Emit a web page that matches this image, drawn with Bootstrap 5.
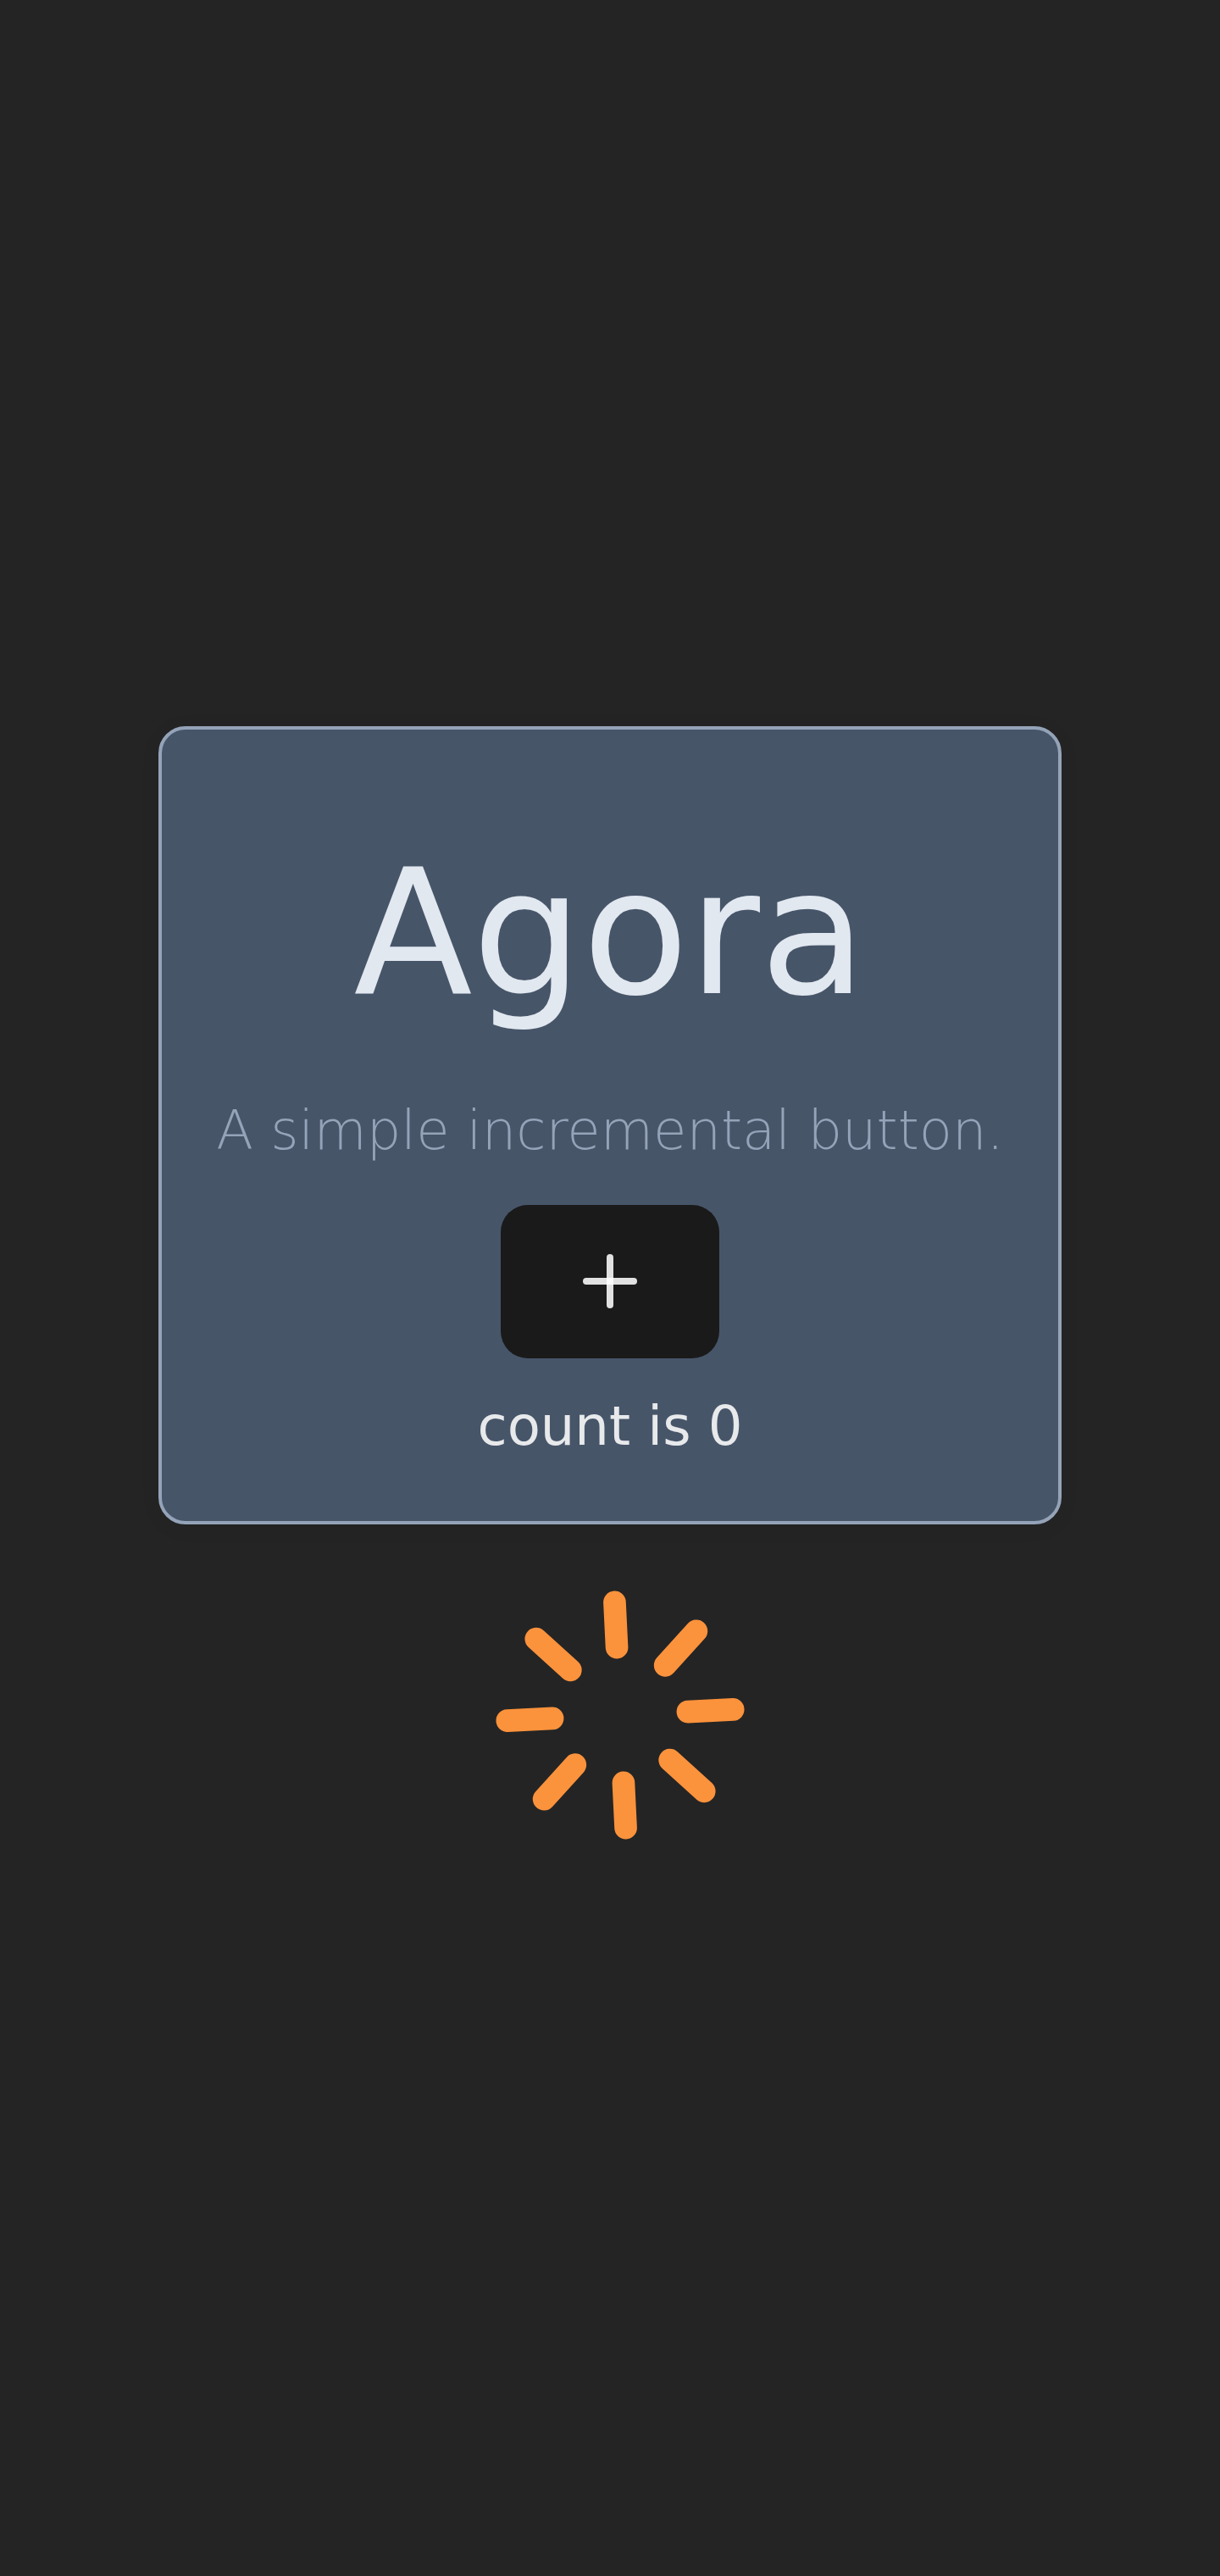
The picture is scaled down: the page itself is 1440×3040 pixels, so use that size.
<!DOCTYPE html>
<html lang="en">
<head>
<meta charset="utf-8">
<meta name="viewport" content="width=device-width, initial-scale=1">
<title>Agora</title>
<link href="https://cdn.jsdelivr.net/npm/bootstrap@5.3.0/dist/css/bootstrap.min.css" rel="stylesheet">
<style>
  body {
    background: #242424;
    color: rgba(255, 255, 255, .87);
    font-family: "DejaVu Sans", sans-serif;
    font-size: 64px;
    line-height: 96px;
    padding-top: 857px;
    height: 3040px;
  }
  .counter-card {
    width: 1065.4px;
    height: 942px;
    padding: 128px 0 64px;
    background: #475569;
    border: 4px solid #94a3b8;
    border-radius: 32px;
    box-shadow: 0 4px 24px 0 rgba(0, 0, 0, .06);
  }
  .counter-title {
    font-size: 204.8px;
    font-weight: 400;
    line-height: 225.3px;
    color: #e2e8f0;
    margin: 0 0 71.7px;
  }
  .counter-note {
    font-weight: 200;
    color: #94a3b8;
    margin: 0 0 40px;
  }
  .counter-btn,
  .counter-btn:hover {
    width: 258px;
    height: 181px;
    background: #1a1a1a;
    border: 0;
    border-radius: 32px;
    padding: 0;
    margin-bottom: 32px;
  }
  .spinner-icon { margin: 65px 0 0 24px; }
</style>
<script src="https://cdn.jsdelivr.net/npm/bootstrap@5.3.0/dist/js/bootstrap.bundle.min.js"></script>
</head>
<body class="d-flex flex-column align-items-center text-center">
  <main class="counter-card d-flex flex-column align-items-center flex-shrink-0">
    <h1 class="counter-title">Agora</h1>
    <p class="counter-note text-nowrap">A simple incremental button.</p>
    <button type="button" class="counter-btn btn d-flex align-items-center justify-content-center flex-shrink-0" aria-label="Increment">
      <svg width="64" height="64" viewBox="0 0 64 64" fill="#fff" fill-opacity=".87">
        <rect x="28" y="0" width="8" height="64" rx="4"/>
        <rect x="0" y="28" width="64" height="8" rx="4"/>
      </svg>
    </button>
    <p class="m-0">count is 0</p>
  </main>
  <svg class="spinner-icon flex-shrink-0" width="320" height="320" viewBox="0 0 24 24" fill="none" stroke="#fb923c" stroke-width="2" stroke-linecap="round">
    <path transform="rotate(-2.82 12 12)" d="M12 2v4M16.2 7.8l2.9-2.9M18 12h4M16.2 16.2l2.9 2.9M12 18v4M4.9 19.1l2.9-2.9M2 12h4M4.9 4.9l2.9 2.9"/>
  </svg>
</body>
</html>
